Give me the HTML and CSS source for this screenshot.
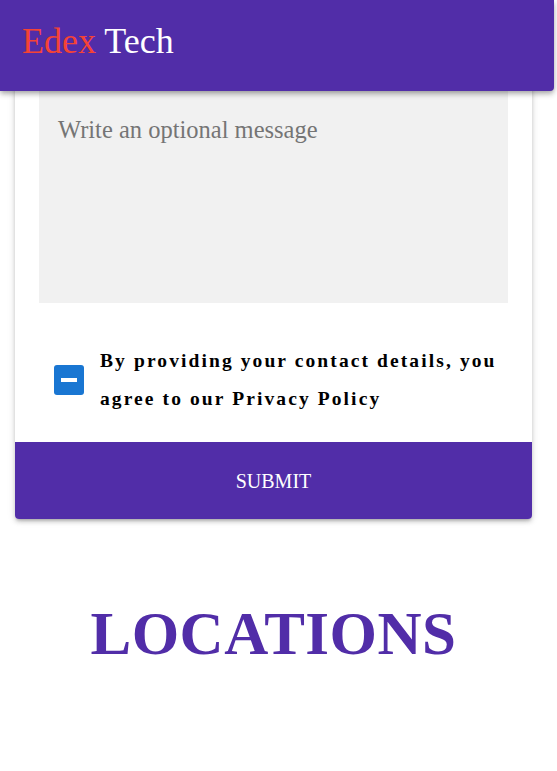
FILE: index.html
```html
<!DOCTYPE html>
<html>
<head>
<meta charset="utf-8">
<link rel="stylesheet" href="styles.css">
</head>
<body>
<header class="appbar">
  <span class="brand"><span class="brand-red">Edex</span> Tech</span>
</header>
<main class="page">
  <form class="card">
    <div class="card-body">
      <textarea class="message" placeholder="Write an optional message"></textarea>
      <label class="consent">
        <span class="check"><span class="check-bar"></span></span>
        <span class="consent-text">By providing your contact details, you agree to our Privacy Policy</span>
      </label>
    </div>
    <button type="button" class="submit">SUBMIT</button>
  </form>
  <h1 class="locations">LOCATIONS</h1>
</main>
</body>
</html>
```

FILE: styles.css
```css
html, body {
  margin: 0;
  padding: 0;
  background: #fff;
  font-family: "Liberation Serif", "Times New Roman", serif;
  overflow: hidden;
}

.appbar {
  position: sticky;
  top: 0;
  z-index: 10;
  width: calc(100% - 3px);
  height: 91px;
  box-sizing: border-box;
  background: #512da8;
  border-radius: 0 0 4px 0;
  box-shadow: 0 2px 4px -1px rgba(0,0,0,.2), 0 4px 5px 0 rgba(0,0,0,.14), 0 1px 10px 0 rgba(0,0,0,.12);
  display: flex;
  align-items: center;
  padding: 0 0 10px 22px;
}

.brand {
  font-size: 36px;
  color: #fff;
  line-height: 1;
}

.brand-red {
  color: #f44336;
}

.page {
  padding: 0 25px 0 15px;
}

.card {
  margin-top: -30px;
  background: #fff;
  border-radius: 4px;
  box-shadow: 0 3px 3px -2px rgba(0,0,0,.2), 0 3px 4px 0 rgba(0,0,0,.14), 0 1px 8px 0 rgba(0,0,0,.12);
  overflow: hidden;
}

.card-body {
  padding: 0 24px 24px;
}

.message {
  display: block;
  width: 100%;
  box-sizing: border-box;
  height: 242px;
  border: none;
  outline: none;
  resize: none;
  background: #f1f1f1;
  padding: 55px 19px 0;
  font-family: "Liberation Serif", "Times New Roman", serif;
  font-size: 24.5px;
  color: #333;
}

.message::placeholder {
  color: #757575;
}

.consent {
  display: flex;
  align-items: center;
  gap: 16px;
  padding: 39px 0 0 15px;
}

.check {
  flex: none;
  width: 30px;
  height: 30px;
  border-radius: 3px;
  background: #1976d2;
  display: flex;
  align-items: center;
  justify-content: center;
}

.check-bar {
  width: 16px;
  height: 4px;
  background: #fff;
}

.consent-text {
  font-weight: bold;
  font-size: 19.5px;
  letter-spacing: 2.1px;
  line-height: 38px;
  color: #000;
}

.submit {
  display: block;
  width: 100%;
  height: 77px;
  border: none;
  background: #512da8;
  color: #fff;
  font-family: "Liberation Serif", "Times New Roman", serif;
  font-size: 20px;
  padding: 2px 0 0;
}

.locations {
  margin: 80px 0 0;
  text-align: center;
  color: #512da8;
  font-size: 61px;
  font-weight: bold;
  letter-spacing: 0.5px;
}
```
